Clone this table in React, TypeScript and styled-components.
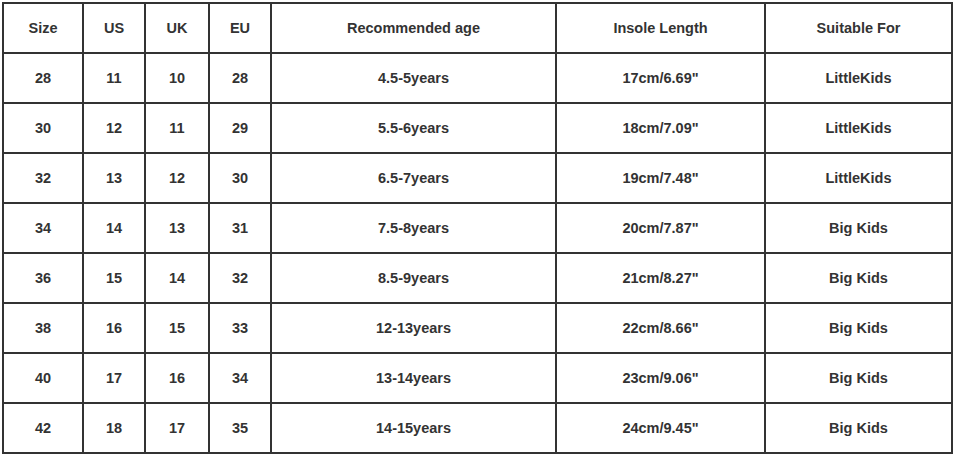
import React from 'react';
import styled, { createGlobalStyle } from 'styled-components';

const GlobalStyle = createGlobalStyle`
  body {
    margin: 0;
    background: #ffffff;
    font-family: 'Liberation Sans', Arial, sans-serif;
  }
`;

const Page = styled.div`
  padding: 2px 0 0 2px;
`;

const Table = styled.table`
  width: 949px;
  table-layout: fixed;
  border-collapse: collapse;
  border: 2px solid #333;
`;

const Column = styled.col<{ $width: number }>`
  width: ${props => props.$width}px;
`;

const Cell = styled.td`
  height: 48px;
  padding: 0;
  border: 2px solid #333;
  text-align: center;
  vertical-align: middle;
  font-size: 14.5px;
  font-weight: 700;
  color: #333;
`;

const HeadCell = styled(Cell).attrs({ as: 'th' })``;

const columns = [
  { label: 'Size', width: 80 },
  { label: 'US', width: 62 },
  { label: 'UK', width: 64 },
  { label: 'EU', width: 62 },
  { label: 'Recommended age', width: 285 },
  { label: 'Insole Length', width: 209 },
  { label: 'Suitable For', width: 187 },
];

const rows = [
  ['28', '11', '10', '28', '4.5-5years', '17cm/6.69"', 'LittleKids'],
  ['30', '12', '11', '29', '5.5-6years', '18cm/7.09"', 'LittleKids'],
  ['32', '13', '12', '30', '6.5-7years', '19cm/7.48"', 'LittleKids'],
  ['34', '14', '13', '31', '7.5-8years', '20cm/7.87"', 'Big Kids'],
  ['36', '15', '14', '32', '8.5-9years', '21cm/8.27"', 'Big Kids'],
  ['38', '16', '15', '33', '12-13years', '22cm/8.66"', 'Big Kids'],
  ['40', '17', '16', '34', '13-14years', '23cm/9.06"', 'Big Kids'],
  ['42', '18', '17', '35', '14-15years', '24cm/9.45"', 'Big Kids'],
];

const App: React.FC = () => {
  return (
    <Page>
      <GlobalStyle />
      <Table>
        <colgroup>
          {columns.map((c) => (
            <Column key={c.label} $width={c.width} />
          ))}
        </colgroup>
        <thead>
          <tr>
            {columns.map((c) => (
              <HeadCell key={c.label}>{c.label}</HeadCell>
            ))}
          </tr>
        </thead>
        <tbody>
          {rows.map((row) => (
            <tr key={row[0]}>
              {row.map((value, i) => (
                <Cell key={i}>{value}</Cell>
              ))}
            </tr>
          ))}
        </tbody>
      </Table>
    </Page>
  );
};

export default App;
